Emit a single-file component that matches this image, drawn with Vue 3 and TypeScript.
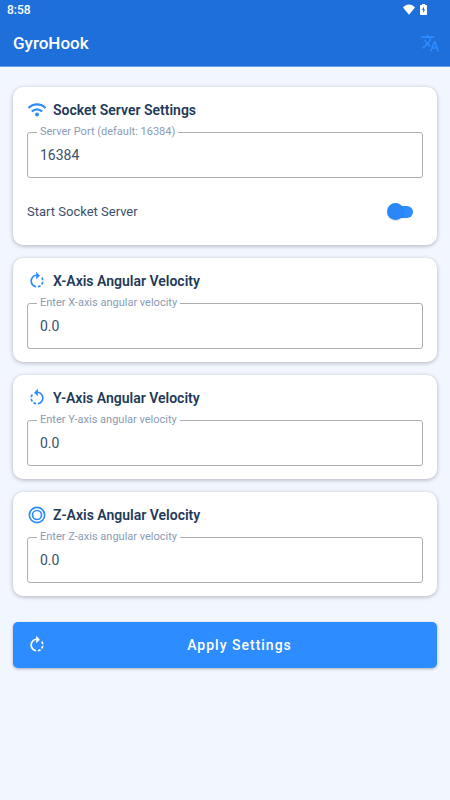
<script setup lang="ts">
import { ref } from 'vue'

type IconName = 'right' | 'left' | 'rings'
interface Axis {
  id: string
  icon: IconName
  value: string
}

const port = ref('16384')
const serverOn = ref(false)
const axes = ref<Axis[]>([
  { id: 'X', icon: 'right', value: '0.0' },
  { id: 'Y', icon: 'left', value: '0.0' },
  { id: 'Z', icon: 'rings', value: '0.0' },
])

const rotateRight =
  'M15.55 5.55L11 1v3.07C7.06 4.56 4 7.92 4 12s3.05 7.44 7 7.93v-2.02c-2.84-.48-5-2.94-5-5.91s2.16-5.43 5-5.91V10l4.55-4.45zM19.93 11c-.17-1.39-.72-2.73-1.62-3.89l-1.42 1.42c.54.75.88 1.6 1.02 2.47h2.02zM13 17.9v2.02c1.39-.17 2.74-.71 3.9-1.61l-1.44-1.44c-.75.54-1.59.89-2.46 1.03zm3.89-2.42l1.42 1.41c.9-1.16 1.45-2.5 1.62-3.89h-2.02c-.14.87-.48 1.72-1.02 2.48z'
const rotateLeft =
  'M7.11 8.53L5.7 7.11C4.8 8.27 4.24 9.61 4.07 11h2.02c.14-.87.49-1.72 1.02-2.47zM6.09 13H4.07c.17 1.39.72 2.73 1.62 3.89l1.41-1.42c-.52-.75-.87-1.59-1.01-2.47zm1.01 5.32c1.16.9 2.51 1.44 3.9 1.61V17.9c-.87-.15-1.71-.49-2.46-1.03L7.1 18.32zM13 4.07V1L8.45 5.55 13 10V6.09c2.84.48 5 2.94 5 5.91s-2.16 5.43-5 5.91v2.02c3.95-.49 7-3.85 7-7.93s-3.05-7.44-7-7.93z'
</script>

<template>
  <div class="screen">
    <header class="top">
      <div class="status">
        <span>8:58</span>
        <span class="status-icons">
          <svg class="status-wifi" viewBox="0 0 12 11" aria-hidden="true"><path d="M6 10.8L0 3.4C1.6 1.6 3.7.5 6 .5s4.400 1.100 6 2.900z" /></svg>
          <svg class="status-battery" viewBox="0 0 7 11" aria-hidden="true"><path fill-rule="evenodd" d="M2 0h3v1h1.200c.5 0 .8.3.8.8v8.400c0 .5-.3.8-.8.8H.8c-.5 0-.8-.3-.8-.8V1.800C0 1.300.3 1 .8 1H2zM4 2.500L2 6h1.200v3l1.900-3.500H4z" /></svg>
        </span>
      </div>
      <div class="app-bar">
        <h1>GyroHook</h1>
        <button class="translate" type="button" aria-label="Language">
          <svg class="icon" viewBox="0 0 24 24" aria-hidden="true"><path d="M12.870 15.070l-2.540-2.510.03-.03c1.740-1.940 2.980-4.170 3.710-6.530H17V4h-7V2H8v2H1v1.990h11.170C11.500 7.920 10.440 9.750 9 11.350 8.070 10.320 7.300 9.190 6.690 8h-2c.73 1.630 1.730 3.170 2.980 4.560l-5.090 5.020L4 19l5-5 3.110 3.110.76-2.040zM18.500 10h-2L12 22h2l1.120-3h4.750L21 22h2l-4.500-12zm-2.620 7l1.620-4.330L19.120 17h-3.240z" /></svg>
        </button>
      </div>
    </header>

    <main class="content">
      <section class="card">
        <h2>
          <svg class="icon" viewBox="0 0 20 20" aria-hidden="true">
            <g fill="none" stroke="currentColor" stroke-width="2.300">
              <path d="M1.500 8a12 12 0 0 1 17 0" />
              <path d="M4.800 11.500a7.300 7.300 0 0 1 10.400 0" />
            </g>
            <circle cx="10" cy="14.600" r="2" />
          </svg>
          Socket Server Settings
        </h2>
        <fieldset class="field">
          <legend><label for="port">Server Port (default: 16384)</label></legend>
          <input id="port" v-model="port" type="text" inputmode="numeric" />
        </fieldset>
        <div class="switch-row">
          <label for="server">Start Socket Server</label>
          <input id="server" v-model="serverOn" class="switch" type="checkbox" role="switch" />
        </div>
      </section>

      <section v-for="axis in axes" :key="axis.id" class="card">
        <h2>
          <svg class="icon" viewBox="0 0 24 24" aria-hidden="true">
            <path v-if="axis.icon === 'right'" :d="rotateRight" />
            <path v-else-if="axis.icon === 'left'" :d="rotateLeft" />
            <g v-else fill="none" stroke="currentColor" stroke-width="2">
              <circle cx="12" cy="12" r="9.200" />
              <circle cx="12" cy="12" r="5.400" />
            </g>
          </svg>
          {{ axis.id }}-Axis Angular Velocity
        </h2>
        <fieldset class="field">
          <legend><label :for="'axis-' + axis.id">Enter {{ axis.id }}-axis angular velocity</label></legend>
          <input :id="'axis-' + axis.id" v-model="axis.value" type="text" inputmode="decimal" />
        </fieldset>
      </section>

      <button class="apply" type="button">
        <svg class="icon" viewBox="0 0 24 24" aria-hidden="true"><path :d="rotateRight" /></svg>
        <span>Apply Settings</span>
      </button>
    </main>
  </div>
</template>

<style>
body {
  margin: 0;
  background: #f2f6ff;
}
</style>

<style scoped>
.screen {
  min-height: 100vh;
  background: #f2f6ff;
  color: #3b506b;
  font-family: Roboto, "Liberation Sans", sans-serif;
  font-size: 13px;
}

.screen * {
  box-sizing: border-box;
}

.icon {
  flex: none;
  width: 20px;
  height: 20px;
  fill: currentColor;
}

.top {
  background: #1f6fdb;
  color: #fff;
  border-bottom: 1px solid #6a9fe8;
}

.status {
  display: flex;
  align-items: center;
  justify-content: space-between;
  height: 20px;
  padding: 0 23px 0 7px;
  font-size: 12px;
  font-weight: 500;
}

.status-icons {
  display: flex;
  align-items: center;
  gap: 5px;
  height: 16px;
  padding-bottom: 2px;
  fill: #fff;
}

.status-wifi {
  width: 12px;
  height: 11px;
}

.status-battery {
  width: 7px;
  height: 11px;
}

.app-bar {
  display: flex;
  align-items: center;
  justify-content: space-between;
  height: 46px;
  padding: 0 10px 0 13px;
}

h1 {
  margin: 0;
  font-size: 17px;
  font-weight: 500;
}

.translate {
  display: flex;
  padding: 0;
  border: 0;
  background: none;
  color: #2d8cff;
}

.content {
  display: flex;
  flex-direction: column;
  gap: 13px;
  padding: 20px 13px;
}

.card {
  padding: 13px 14px;
  border-radius: 10px;
  background: #fff;
  box-shadow: 0 1px 4px rgba(0, 0, 0, 0.28);
}

h2 {
  display: flex;
  align-items: center;
  gap: 6px;
  margin: 0 0 5px;
  color: #1f3a57;
  font-size: 14px;
  font-weight: 600;
  line-height: 20px;
}

h2 .icon {
  color: #2d8cff;
}

.field {
  min-width: 0;
  margin: 0;
  padding: 0 9px;
  border: 1px solid #adadad;
  border-radius: 3px;
}

legend {
  height: 14px;
  padding: 0 3px;
  color: #8a9bb5;
  font-size: 11px;
  line-height: 14px;
}

legend label {
  display: block;
}

.field input {
  display: block;
  width: 100%;
  height: 38px;
  padding: 0 3px 7px;
  border: 0;
  outline: 0;
  background: none;
  color: #3b506b;
  font: inherit;
  font-size: 14px;
}

.switch-row {
  display: flex;
  align-items: center;
  justify-content: space-between;
  height: 41px;
  margin-top: 13px;
  padding-right: 10px;
}

.switch {
  appearance: none;
  display: flex;
  align-items: center;
  width: 23px;
  height: 12px;
  margin: 0;
  border-radius: 6px;
  background: #2d8cff;
}

.switch::before {
  content: "";
  flex: none;
  width: 17px;
  height: 17px;
  margin-left: -3px;
  border-radius: 50%;
  background: #2b86f8;
  box-shadow: 0 1px 1px rgba(0, 0, 0, 0.15);
}

.switch:checked::before {
  margin-left: 9px;
}

.apply {
  display: flex;
  align-items: center;
  gap: 8px;
  height: 46px;
  margin: 13px 0 0;
  padding: 0 13px 0 14px;
  border: 0;
  border-radius: 5px;
  background: #2d8cff;
  box-shadow: 0 1px 3px rgba(0, 0, 0, 0.3);
  color: #fff;
  font: inherit;
  font-size: 14px;
  font-weight: 500;
  letter-spacing: 1px;
}

.apply span {
  flex: 1;
}
</style>
